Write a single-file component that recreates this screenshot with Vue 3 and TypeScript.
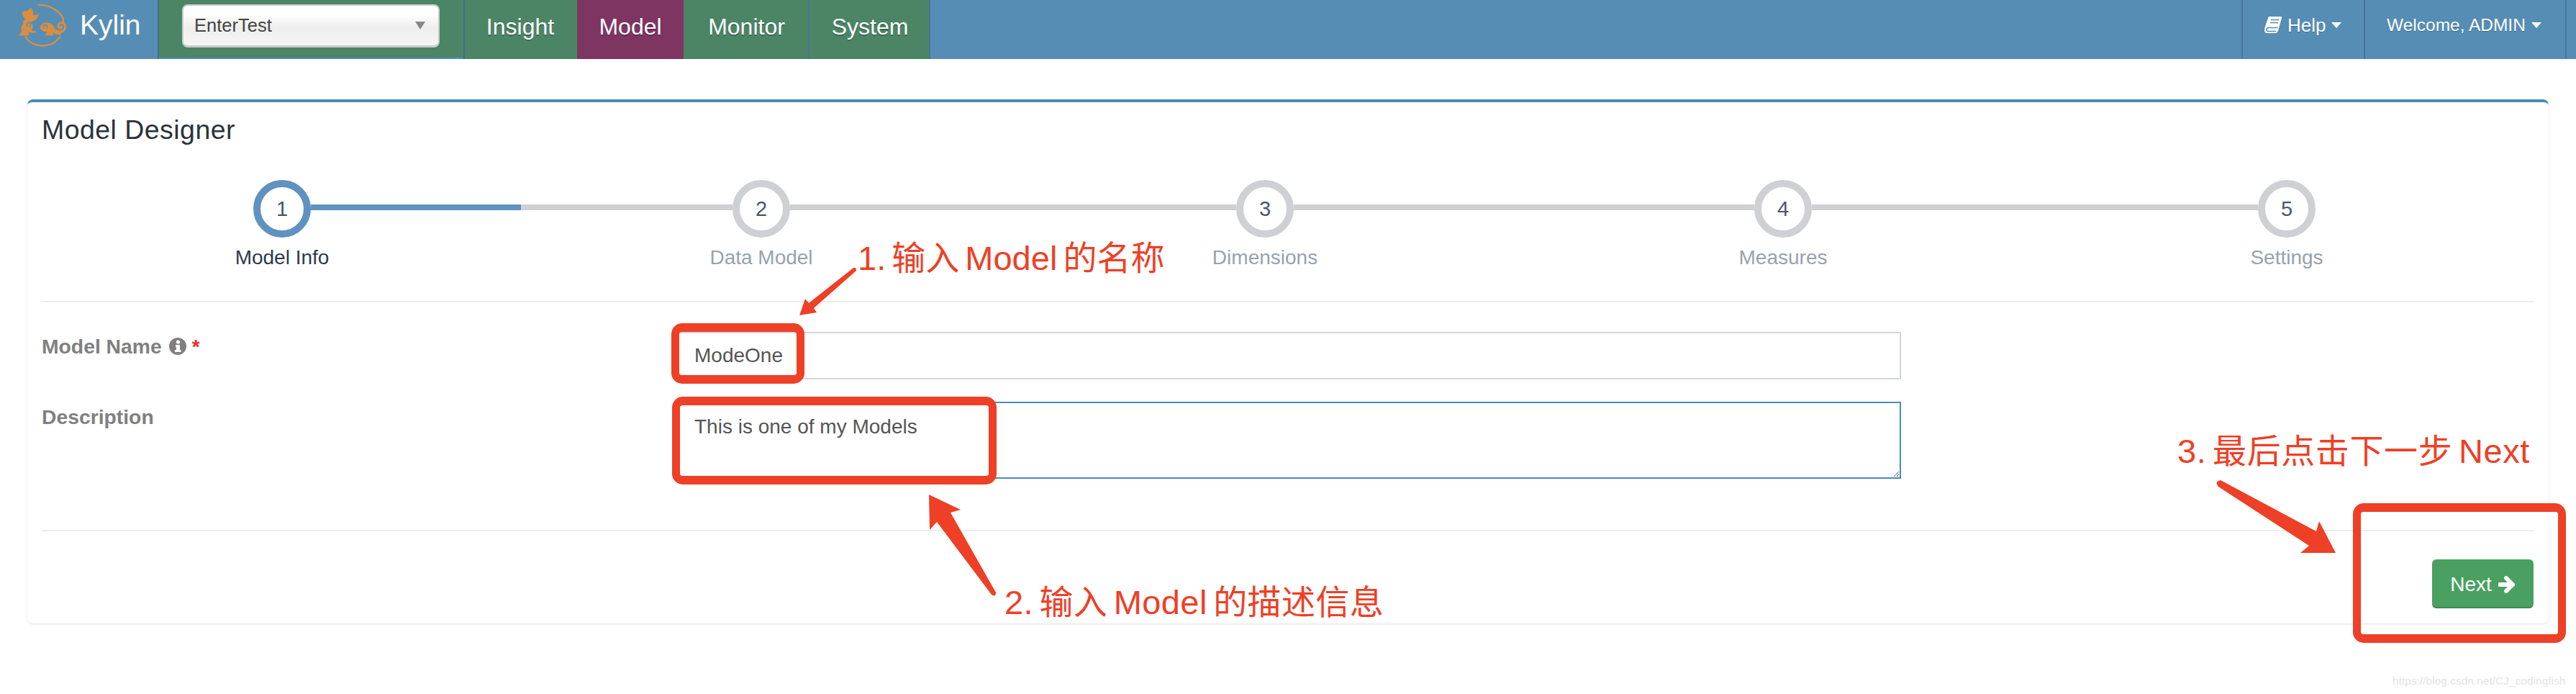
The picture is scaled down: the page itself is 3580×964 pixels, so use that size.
<script setup lang="ts">
// Kylin model designer, step 1, with the red tutorial annotations on top.
interface Step {
  label: string
  gap: number // connector width to the next step
}

const steps: Step[] = [
  { label: 'Model Info', gap: 586 },
  { label: 'Data Model', gap: 620 },
  { label: 'Dimensions', gap: 640 },
  { label: 'Measures', gap: 620 },
  { label: 'Settings', gap: 0 },
]

const menu = [
  { label: 'Insight', width: 158 },
  { label: 'Model', width: 148 },
  { label: 'Monitor', width: 175 },
  { label: 'System', width: 168 },
]
</script>

<template>
  <div class="page">
    <header class="topbar">
      <a class="brand">
        <svg class="logo" viewBox="0 0 240 246" aria-hidden="true">
          <path class="logo-ring" d="M100 21 C150 18 205 55 205 92" />
          <path class="logo-ring" d="M46 153 C75 200 150 205 190 155" />
          <path class="logo-fill" d="M33 48 L52 46 L70 32 L78 50 L80 64 Q96 64 101 52 Q102 76 82 86 Q72 94 62 92 Q86 104 72 122 L74 127 L92 131 L92 136 L74 138 L62 132 L58 148 L15 148 L30 134 Q24 115 38 100 Q32 90 48 79 L38 73 L33 60 Z" />
          <path class="logo-fill" d="M106 118 Q112 92 138 94 Q160 96 170 122 Q185 138 200 131 L192 146 Q172 146 160 136 L164 148 L128 148 L138 132 Q122 136 106 118 Z" />
          <path class="logo-scroll" d="M122 116 Q118 104 130 104 Q140 106 136 116" />
          <path class="logo-tail" d="M172 128 Q205 142 212 115 Q212 92 192 96 Q178 102 186 116 Q196 120 197 110" />
          <path class="logo-scroll" d="M55 108 Q46 98 58 94 Q72 96 66 112" />
        </svg>
        <span class="brand-name">Kylin</span>
      </a>

      <div class="project">
        <div class="project-select">
          <span>EnterTest</span>
          <i class="select-arrow" />
        </div>
      </div>

      <nav class="menu">
        <a
          v-for="item in menu"
          :key="item.label"
          class="menu-item"
          :class="{ active: item.label === 'Model' }"
          :style="{ width: item.width + 'px' }"
        >{{ item.label }}</a>
      </nav>

      <div class="top-right">
        <a class="top-link help">
          <svg class="book" viewBox="0 0 24 24" aria-hidden="true">
            <path d="M7 0 H23 Q24.500 0 24 2 L19.500 18 Q18.500 22 16 23 H4 Q0 23 0 18.500 Q0 17 1 14 L5 2 Q5.500 0 7 0 Z" />
            <path class="book-cut" d="M9 4.500 H20 M8 8.500 H19 M18.500 15.500 H5 Q2.500 16 3 19 Q3.500 20.500 5 20.500 H16" />
          </svg>
          <span>Help</span>
          <i class="caret" />
        </a>
        <a class="top-link welcome">
          <span>Welcome, ADMIN</span>
          <i class="caret" />
        </a>
      </div>
    </header>

    <main class="content">
      <section class="card">
        <h2 class="card-title">Model Designer</h2>

        <ol class="stepper">
          <template v-for="(step, i) in steps" :key="step.label">
            <li class="step" :class="{ current: i === 0 }">
              <span class="step-dot">{{ i + 1 }}</span>
              <span class="step-label">{{ step.label }}</span>
            </li>
            <li v-if="step.gap" class="step-line" :style="{ width: step.gap + 'px' }">
              <span v-if="i === 0" class="step-progress" />
            </li>
          </template>
        </ol>

        <form class="form" @submit.prevent>
          <label class="form-label" for="model-name">
            Model Name
            <svg class="info" viewBox="0 0 24 24" aria-hidden="true">
              <circle cx="12" cy="12" r="12" />
              <circle class="info-i" cx="12.500" cy="6" r="2.600" />
              <path class="info-i" d="M9 10 H15 V17 H16.500 V20 H8 V17 H10 V13 H9 Z" />
            </svg>
            <em class="required">*</em>
          </label>
          <input id="model-name" class="field" type="text" value="ModeOne" />

          <label class="form-label desc-label" for="model-desc">Description</label>
          <textarea id="model-desc" class="field area">This is one of my Models</textarea>
        </form>

        <footer class="card-footer">
          <button class="next" type="button">
            Next
            <svg class="next-arrow" viewBox="0 0 24 24" aria-hidden="true">
              <path d="M2 12 H20 M11 3 L20 12 L11 21" />
            </svg>
          </button>
        </footer>
      </section>
    </main>

    <!-- Tutorial marks drawn over the screenshot -->
    <div class="marks" aria-hidden="true">
      <svg class="marks-svg" viewBox="0 0 3580 964">
        <path d="M1186 372 Q1190 371 1190 376 L1131 428 L1135 434 L1111 438 L1119 415 L1124 421 Z" />
        <path d="M1291 687 L1335 708 L1321 712 L1384 823 Q1384 830 1378 826 L1302 725 L1292 736 Z" />
        <path d="M3086 667 L3219 738 L3223 724 L3246 768 L3197 768 L3209 758 L3083 676 Q3077 669 3086 667 Z" />
      </svg>
      <div class="box box-name" />
      <div class="box box-desc" />
      <div class="box box-next" />
      <span class="note note-1">1. 输入 Model 的名称</span>
      <span class="note note-2">2. 输入 Model 的描述信息</span>
      <span class="note note-3">3. 最后点击下一步 Next</span>
      <span class="watermark">https://blog.csdn.net/CJ_codingfish</span>
    </div>
  </div>
</template>

<style>
html, body { background: #fff; }
</style>

<style scoped>
.page {
  position: relative;
  width: 3580px;
  height: 964px;
  overflow: hidden;
  background: #fff;
  font-family: "Liberation Sans", Arial, sans-serif;
}

/* top bar */
.topbar {
  display: flex;
  height: 82px;
  background: #568db5;
  color: #fff;
}
.brand {
  display: flex;
  align-items: center;
  width: 221px;
  padding-left: 20px;
  box-sizing: border-box;
  border-right: 2px solid #3f7089;
}
.logo { width: 80px; height: 82px; flex: none; }
.logo-ring { fill: none; stroke: #d98e42; stroke-width: 7; stroke-linecap: round; }
.logo-fill { fill: #d98e42; }
.logo-scroll { fill: none; stroke: #568db5; stroke-width: 4; stroke-linecap: round; }
.logo-tail { fill: none; stroke: #d98e42; stroke-width: 9; stroke-linecap: round; }
.brand-name {
  margin: 0 0 13px 11px;
  font-size: 39px;
  line-height: 69px;
}

.project {
  display: flex;
  align-items: flex-start;
  width: 423px;
  height: 80px;
  padding: 6px 0 0 32px;
  box-sizing: border-box;
  background: #4b8566;
}
.project-select {
  display: flex;
  align-items: center;
  justify-content: space-between;
  width: 358px;
  height: 60px;
  padding: 0 18px 0 15px;
  box-sizing: border-box;
  border: 2px solid #ccc;
  border-bottom-width: 3px;
  border-radius: 8px;
  background: linear-gradient(#fff 20%, #eee 55%, #f6f6f6);
  color: #444;
  font-size: 25.500px;
}
.select-arrow {
  width: 0;
  height: 0;
  border-left: 7px solid transparent;
  border-right: 7px solid transparent;
  border-top: 11px solid #888;
}

.menu { display: flex; }
.menu-item {
  box-sizing: border-box;
  height: 82px;
  background: #4b8566;
  box-shadow: inset -2px 0 0 #44769b;
  font-size: 32px;
  line-height: 74px;
  text-align: center;
  text-shadow: 0 2px 0 rgba(0, 0, 0, 0.22);
}
.menu-item:first-child { box-shadow: inset 2px 0 0 #3f7089; }
.menu-item.active { background: #7e3562; box-shadow: none; }
.menu-item:nth-child(3) { box-shadow: inset -2px 0 0 #44769b; }

.top-right {
  display: flex;
  margin-left: auto;
  margin-right: 13px;
  border-left: 2px solid #44769b;
}
.top-link {
  display: flex;
  align-items: center;
  height: 82px;
  padding: 0 30px 12px;
  box-sizing: border-box;
  border-right: 2px solid #44769b;
  text-shadow: 0 1px 0 rgba(0, 0, 0, 0.25);
}
.help { width: 170px; font-size: 26px; }
.welcome { width: 280px; font-size: 24.500px; }
.book { width: 24px; height: 24px; margin-right: 8px; fill: #fff; flex: none; }
.book-cut { fill: none; stroke: #568db5; stroke-width: 1.600; }
.caret {
  width: 0;
  height: 0;
  margin-left: 8px;
  border-left: 7.500px solid transparent;
  border-right: 7.500px solid transparent;
  border-top: 8px solid #fff;
}

/* card */
.content { padding: 56px 38px 0; }
.card {
  box-sizing: border-box;
  height: 728px;
  padding: 0 21px 0 20px;
  border-top: 4px solid #4c87b4;
  border-radius: 8px;
  box-shadow: 0 1px 3px rgba(0, 0, 0, 0.13);
}
.card-title {
  margin: 0;
  height: 76px;
  color: #2b333b;
  font-size: 37.500px;
  font-weight: 400;
  letter-spacing: 0.450px;
  line-height: 76px;
}

.stepper {
  display: flex;
  margin: 32px 0 0;
  padding: 0 0 40px 294px;
  border-bottom: 2px solid #eee;
  list-style: none;
}
.step {
  display: flex;
  flex-direction: column;
  align-items: center;
  width: 80px;
  flex: none;
}
.step-dot {
  display: flex;
  align-items: center;
  justify-content: center;
  width: 80px;
  height: 80px;
  box-sizing: border-box;
  border: 10px solid #ced0d4;
  border-radius: 50%;
  color: #4a5668;
  font-size: 29px;
}
.step-label {
  margin-top: 8px;
  color: #98a2ad;
  font-size: 28px;
  line-height: 40px;
  white-space: nowrap;
}
.current .step-dot { border-color: #6092c0; }
.current .step-label { color: #2d3a50; }
.step-line {
  flex: none;
  height: 8px;
  margin-top: 34px;
  background: #ced0d4;
}
.step-progress {
  display: block;
  width: 292px;
  height: 100%;
  background: #6092c0;
}

.form {
  display: grid;
  grid-template-columns: 882px 1702px;
  row-gap: 31px;
  padding-top: 41px;
  height: 318px;
  box-sizing: border-box;
  align-content: start;
  border-bottom: 2px solid #eee;
}
.form-label {
  display: flex;
  align-items: center;
  height: 40px;
  color: #808080;
  font-size: 28.300px;
  font-weight: 700;
}
.desc-label { margin-top: 1px; }
.info { width: 24px; height: 24px; margin-left: 10px; fill: #808080; }
.info-i { fill: #fff; }
.required {
  margin: 2px 0 0 8px;
  color: #e8312a;
  font-style: normal;
  font-size: 28px;
}
.field {
  box-sizing: border-box;
  width: 100%;
  height: 66px;
  padding: 0 23px;
  border: 2px solid #d2d6de;
  border-radius: 0;
  outline: none;
  color: #555;
  font-family: inherit;
  font-size: 28px;
}
.area {
  display: block;
  height: 107px;
  padding: 13px 23px;
  border-color: #4e8ab5;
  line-height: 40px;
  resize: vertical;
}

.card-footer {
  display: flex;
  justify-content: flex-end;
  padding-top: 39px;
}
.next {
  display: flex;
  align-items: center;
  justify-content: center;
  gap: 9px;
  width: 141px;
  height: 68px;
  padding: 4px 0 0;
  border: 0;
  border-bottom: 2px solid #3f8752;
  border-radius: 6px;
  background: #4aa060;
  color: #fff;
  font-family: inherit;
  font-size: 28px;
}
.next-arrow {
  width: 24px;
  height: 24px;
  fill: none;
  stroke: #fff;
  stroke-width: 6;
  stroke-linecap: round;
  stroke-linejoin: round;
}

/* annotations */
.marks { position: absolute; inset: 0; pointer-events: none; }
.marks-svg { position: absolute; inset: 0; width: 100%; height: 100%; fill: #ee4026; }
.box {
  position: absolute;
  box-sizing: border-box;
  border: 12px solid #ee4026;
  border-left-width: 11px;
  border-right-width: 11px;
  border-radius: 15px;
}
.box-name { left: 933px; top: 449px; width: 185px; height: 84px; }
.box-desc { left: 934px; top: 551px; width: 451px; height: 122px; }
.box-next { left: 3270px; top: 699px; width: 296px; height: 194px; }
.note {
  position: absolute;
  color: #ee4026;
  font-family: "Liberation Sans", "Noto Sans CJK SC", sans-serif;
  font-size: 47px;
  line-height: 60px;
  white-space: nowrap;
  word-spacing: -5px;
}
.note-1 { left: 1192px; top: 329px; }
.note-2 { left: 1396px; top: 807px; letter-spacing: 0.400px; }
.note-3 { left: 3026px; top: 597px; letter-spacing: 0.600px; }
.watermark {
  position: absolute;
  left: 3325px;
  top: 934px;
  color: #e4e4e4;
  font-size: 15.500px;
  line-height: 24px;
  white-space: nowrap;
}
</style>
